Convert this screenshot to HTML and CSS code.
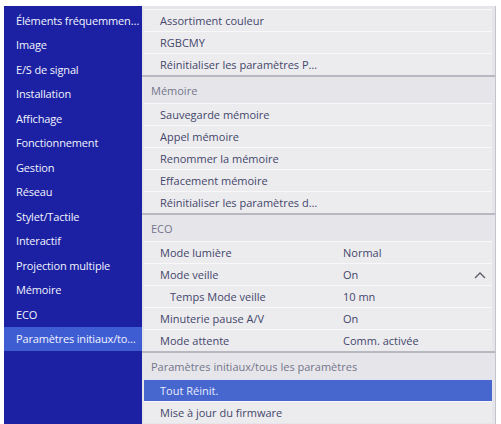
FILE: index.html
```html
<!DOCTYPE html>
<html lang="fr">
<head>
<meta charset="utf-8">
<title>Menu</title>
<link rel="stylesheet" href="styles.css">
</head>
<body>
<div class="screen">
  <nav class="sidebar">
    <div class="nav-item">Éléments fréquemmen…</div>
    <div class="nav-item">Image</div>
    <div class="nav-item">E/S de signal</div>
    <div class="nav-item">Installation</div>
    <div class="nav-item">Affichage</div>
    <div class="nav-item">Fonctionnement</div>
    <div class="nav-item">Gestion</div>
    <div class="nav-item">Réseau</div>
    <div class="nav-item">Stylet/Tactile</div>
    <div class="nav-item">Interactif</div>
    <div class="nav-item">Projection multiple</div>
    <div class="nav-item">Mémoire</div>
    <div class="nav-item">ECO</div>
    <div class="nav-item selected">Paramètres initiaux/to…</div>
  </nav>
  <main class="panel">
    <div class="row"><span class="label">Assortiment couleur</span></div>
    <div class="row"><span class="label">RGBCMY</span></div>
    <div class="row"><span class="label">Réinitialiser les paramètres P…</span></div>

    <div class="section">Mémoire</div>
    <div class="row"><span class="label">Sauvegarde mémoire</span></div>
    <div class="row"><span class="label">Appel mémoire</span></div>
    <div class="row"><span class="label">Renommer la mémoire</span></div>
    <div class="row"><span class="label">Effacement mémoire</span></div>
    <div class="row"><span class="label">Réinitialiser les paramètres d…</span></div>

    <div class="section">ECO</div>
    <div class="row"><span class="label">Mode lumière</span><span class="value">Normal</span></div>
    <div class="row"><span class="label">Mode veille</span><span class="value">On</span>
      <svg class="chevron" width="12" height="8" viewBox="0 0 12 8"><polyline points="1,7 6,2 11,7" fill="none" stroke="#5a5a66" stroke-width="1.3"/></svg>
    </div>
    <div class="row"><span class="label sub">Temps Mode veille</span><span class="value">10 mn</span></div>
    <div class="row"><span class="label">Minuterie pause A/V</span><span class="value">On</span></div>
    <div class="row"><span class="label">Mode attente</span><span class="value">Comm. activée</span></div>

    <div class="section">Paramètres initiaux/tous les paramètres</div>
    <div class="row active"><span class="label">Tout Réinit.</span></div>
    <div class="row"><span class="label">Mise à jour du firmware</span></div>
  </main>
</div>
</body>
</html>
```

FILE: styles.css
```css
html, body {
  margin: 0;
  padding: 0;
  background: #ffffff;
  overflow: hidden;
}
body {
  width: 501px;
  height: 424px;
  font-family: "Open Sans", "Noto Sans", "DejaVu Sans", sans-serif;
  font-size: 11px;
}
.screen {
  display: flex;
  padding: 6px 0 0 4px;
  height: 440px;
}
.sidebar {
  width: 138px;
  flex: none;
  background: #1b21a2;
  padding-top: 2px;
  box-sizing: border-box;
}
.nav-item {
  height: 24.5px;
  display: flex;
  align-items: center;
  padding-left: 12px;
  color: #f2f3ff;
  white-space: nowrap;
  letter-spacing: -0.15px;
}
.nav-item.selected {
  background: #3e5dd2;
}
.panel {
  width: 354px;
  flex: none;
  background: #e6e6ea;
  border-right: 1px solid #c4c4cc;
  padding-top: 3px;
  box-sizing: border-box;
}
.row {
  height: 22px;
  box-sizing: border-box;
  display: flex;
  align-items: center;
  background: #ececef;
  border-top: 1px solid #f8f8fa;
  margin-left: 2px;
  margin-right: 3px;
  position: relative;
  color: #44466a;
  white-space: nowrap;
}
.label {
  padding-left: 16px;
  width: 199px;
  flex: none;
  box-sizing: border-box;
}
.label.sub {
  padding-left: 26px;
}
.value {
  color: #44466a;
}
.chevron {
  position: absolute;
  right: 6px;
  top: 7px;
}
.section {
  height: 28px;
  box-sizing: border-box;
  border-top: 2px solid #b8b8c0;
  display: flex;
  align-items: center;
  padding-left: 9px;
  color: #74758a;
  background: #e6e6ea;
  white-space: nowrap;
}
.row.active {
  background: #4767cf;
  color: #e8ecff;
  border-top: 1px solid #dfe3f5;
}
.row.active .label {
  color: #e8ecff;
}
```
